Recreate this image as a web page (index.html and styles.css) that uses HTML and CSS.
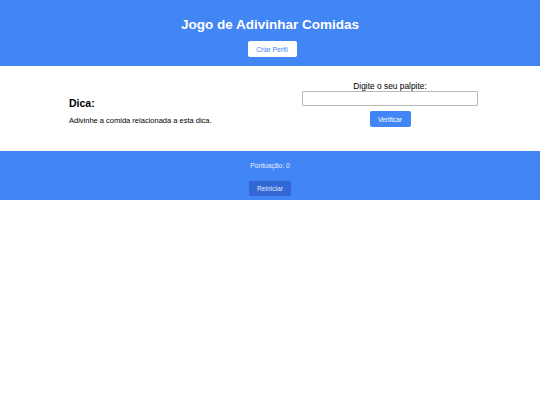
FILE: index.html
```html
<!DOCTYPE html>
<html lang="pt">
<head>
<meta charset="utf-8">
<title>Jogo de Adivinhar Comidas</title>
<link rel="stylesheet" href="styles.css">
</head>
<body>
<header class="top">
  <h1 class="title">Jogo de Adivinhar Comidas</h1>
  <button class="btn-profile">Criar Perfil</button>
</header>
<main class="game">
  <div class="hint">
    <h2 class="hint-title">Dica:</h2>
    <p class="hint-text">Adivinhe a comida relacionada a esta dica.</p>
  </div>
  <div class="guess">
    <label class="guess-label" for="palpite">Digite o seu palpite:</label>
    <input class="guess-input" id="palpite" type="text">
    <button class="btn-check">Verificar</button>
  </div>
</main>
<footer class="bottom">
  <p class="score">Pontuação: 0</p>
  <button class="btn-reset">Reiniciar</button>
</footer>
</body>
</html>
```
FILE: styles.css
```css
* { box-sizing: border-box; }
html, body { margin: 0; padding: 0; background: #fff; }
body { font-family: "Liberation Sans", Arial, sans-serif; color: #000; }

.top {
  background: #4285f4;
  height: 66px;
  display: flex;
  flex-direction: column;
  align-items: center;
  padding-top: 16px;
}
.title {
  margin: 0;
  font-size: 13.5px;
  line-height: 17px;
  font-weight: bold;
  color: #fff;
}
.btn-profile {
  margin: 8px 0 0 4px;
  width: 49px;
  height: 16px;
  padding: 0;
  border: none;
  border-radius: 2px;
  background: #fff;
  color: #4285f4;
  font-family: inherit;
  font-size: 6.7px;
}

.game {
  height: 85px;
  display: flex;
  justify-content: space-between;
  align-items: center;
  padding: 0 62px 0 69px;
}
.hint { padding-top: 5px; }
.hint-title {
  margin: 0;
  font-size: 10.5px;
  line-height: 12px;
  font-weight: bold;
}
.hint-text {
  margin: 7px 0 0;
  font-size: 7.5px;
  line-height: 10px;
}
.guess {
  display: flex;
  flex-direction: column;
  align-items: center;
  width: 176px;
  padding-bottom: 9px;
}
.guess-label {
  font-size: 8.4px;
  line-height: 10px;
}
.guess-input {
  width: 176px;
  height: 15px;
  margin: 0;
  border: 1px solid #b8b8b8;
  border-radius: 1px;
  background: #fff;
}
.btn-check {
  margin-top: 5px;
  width: 41px;
  height: 16px;
  padding: 0;
  border: none;
  border-radius: 2px;
  background: #4285f4;
  color: #fff;
  font-family: inherit;
  font-size: 6.7px;
}

.bottom {
  background: #4285f4;
  height: 49px;
  display: flex;
  flex-direction: column;
  align-items: center;
  padding-top: 10px;
}
.score {
  margin: 0;
  font-size: 6.7px;
  line-height: 9px;
  color: #e8efff;
}
.btn-reset {
  margin-top: 11px;
  width: 42px;
  height: 15px;
  padding: 0;
  border: none;
  border-radius: 1px;
  background: #3367d6;
  color: #dfe8ff;
  font-family: inherit;
  font-size: 6.7px;
}
```
